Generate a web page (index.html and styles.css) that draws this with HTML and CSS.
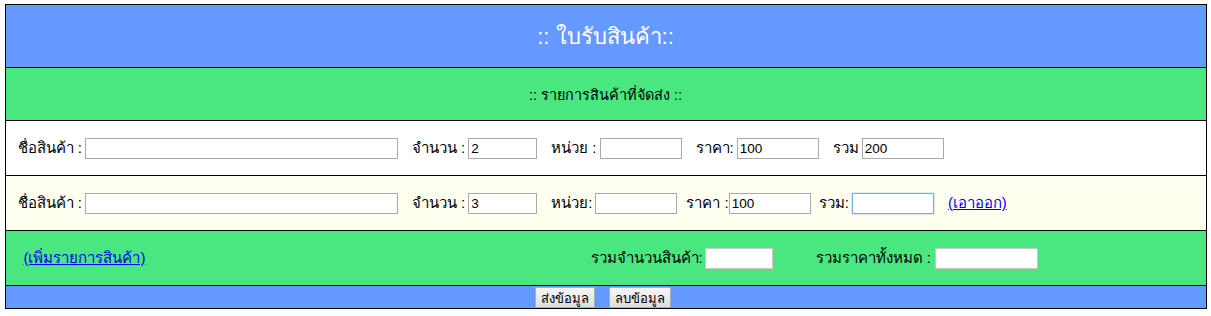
FILE: index.html
```html
<!DOCTYPE html>
<html lang="th">
<head>
    <meta charset="UTF-8">
    <title>ใบรับสินค้า</title>
    <link rel="stylesheet" href="styles.css">
</head>
<body>
    <div class="form-box">
        <div class="head-row">:: ใบรับสินค้า::</div>
        <div class="sub-row">:: รายการสินค้าที่จัดส่ง ::</div>

        <div class="item-row">
            <label>ชื่อสินค้า :</label>
            <input type="text" class="in-name">
            <label class="gap">จำนวน :</label>
            <input type="text" class="in-qty" value="2">
            <label class="gap">หน่วย :</label>
            <input type="text" class="in-unit">
            <label class="gap">ราคา:</label>
            <input type="text" class="in-price" value="100">
            <label class="gap">รวม</label>
            <input type="text" class="in-sum" value="200">
        </div>

        <div class="item-row alt">
            <label>ชื่อสินค้า :</label>
            <input type="text" class="in-name">
            <label class="gap">จำนวน :</label>
            <input type="text" class="in-qty" value="3">
            <label class="gap">หน่วย:</label>
            <input type="text" class="in-unit">
            <label class="gap-sm tight">ราคา :</label>
            <input type="text" class="in-price" value="100">
            <label class="gap-xs">รวม:</label>
            <input type="text" class="in-sum focus">
            <a href="#" class="gap link">(เอาออก)</a>
        </div>

        <div class="total-row">
            <a href="#" class="link add-link">(เพิ่มรายการสินค้า)</a>
            <div class="totals">
                <label>รวมจำนวนสินค้า:</label>
                <input type="text" class="in-total-qty">
                <label class="gap-wide">รวมราคาทั้งหมด :</label>
                <input type="text" class="in-total-price">
            </div>
        </div>

        <div class="btn-row">
            <button class="btn">ส่งข้อมูล</button>
            <button class="btn">ลบข้อมูล</button>
        </div>
    </div>
</body>
</html>
```

FILE: styles.css
```css
body { margin: 4px 0; font-family: "Liberation Sans", Arial, sans-serif; font-size: 15px; color: #000; }
.form-box { width: 1200px; margin: 0 auto; border: 1px solid #000; }
.head-row { background: #6699ff; color: white; font-size: 22px; height: 62px; display: flex; align-items: center; justify-content: center; border-bottom: 1px solid #000; }
.sub-row { background: #4ae680; font-size: 14.5px; height: 52px; display: flex; align-items: center; justify-content: center; border-bottom: 1px solid #000; }
.item-row { background: #fff; height: 54px; display: flex; align-items: center; padding-left: 12px; border-bottom: 1px solid #000; }
.item-row.alt { background: #fffff0; }
.item-row label { margin-right: 3px; }
.item-row label.tight { margin-right: 0; }
.gap { margin-left: 14px; }
.gap-sm { margin-left: 9px; }
.gap-xs { margin-left: 8px; }
input { height: 21px; box-sizing: border-box; border: 1px solid #a9a9a9; padding: 1px 2px; font: 13.5px "Liberation Sans", Arial, sans-serif; }
.in-name { width: 313px; }
.in-qty { width: 69px; }
.in-unit { width: 82px; }
.in-price { width: 82px; }
.in-sum { width: 82px; }
.focus { border: 1px solid #7fa7ee; box-shadow: 0 0 2px #9cc0ff; }
.link { color: #0000ee; text-decoration: underline; }
.total-row { background: #4ae680; height: 54px; display: flex; align-items: center; padding-left: 18px; border-bottom: 1px solid #000; }
.totals { display: flex; align-items: center; margin-left: 445px; }
.totals label { margin-right: 2px; }
.totals input { border: 1px solid #c8c8c8; }
.totals .gap-wide { margin-left: 43px; margin-right: 4px; }
.in-total-qty { width: 68px; }
.in-total-price { width: 103px; }
.btn-row { background: #6699ff; height: 22px; display: flex; justify-content: center; align-items: center; gap: 14px; padding-right: 6px; }
.btn { height: 21px; padding: 0 5px; font: 13px "Liberation Sans", Arial, sans-serif; border: 1px solid #adadad; border-radius: 0; background: linear-gradient(#f6f6f6, #dedede); }
```
